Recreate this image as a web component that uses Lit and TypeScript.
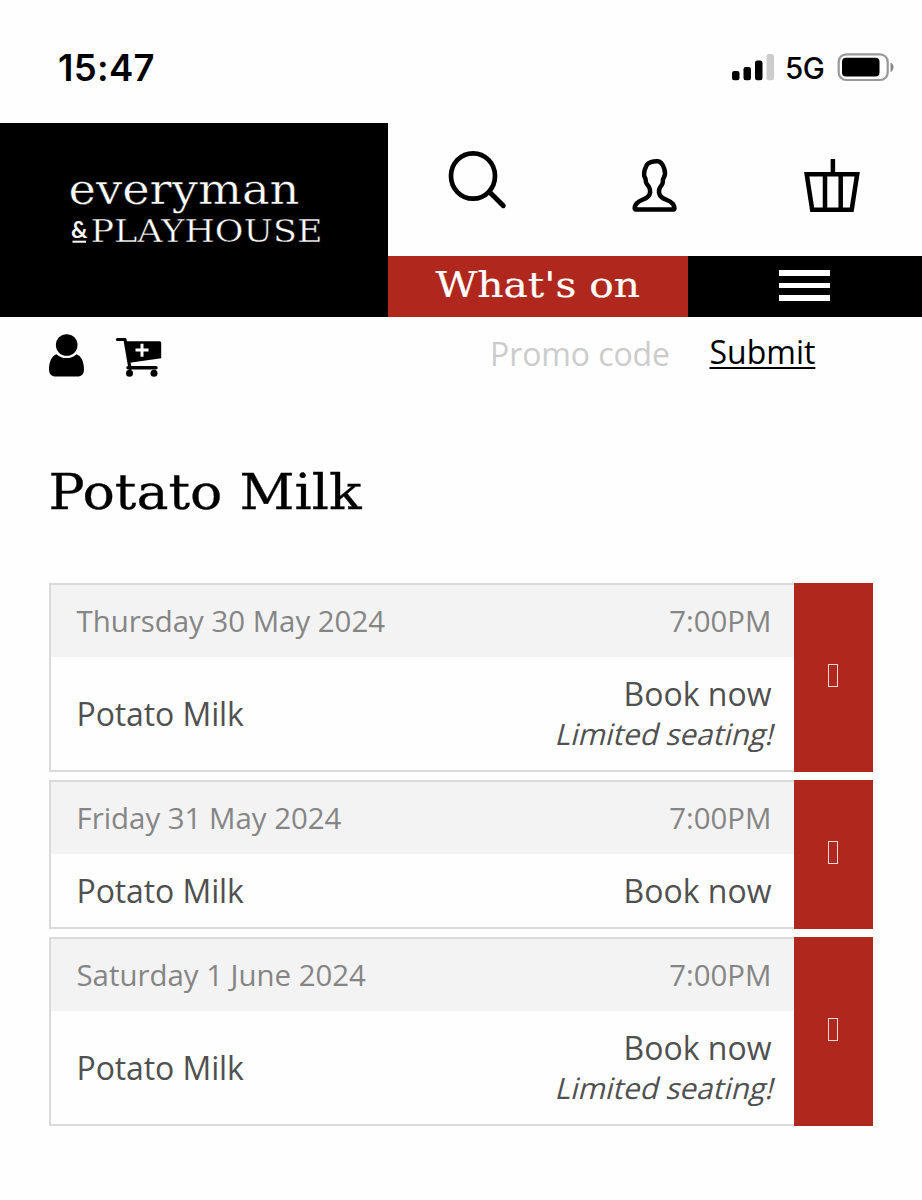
import { LitElement, html, css, nothing } from "lit";
import { customElement, property } from "lit/decorators.js";

interface Performance {
  date: string;
  time: string;
  title: string;
  note?: string;
}

const PERFORMANCES: Performance[] = [
  { date: "Thursday 30 May 2024", time: "7:00PM", title: "Potato Milk", note: "Limited seating!" },
  { date: "Friday 31 May 2024", time: "7:00PM", title: "Potato Milk" },
  { date: "Saturday 1 June 2024", time: "7:00PM", title: "Potato Milk", note: "Limited seating!" },
];

@customElement("status-bar")
class StatusBar extends LitElement {
  static styles = css`
    :host { display: flex; justify-content: space-between; height: 123px; box-sizing: border-box; padding: 48px 27px 0 58px; background: #fefefe; font-family: Inter, sans-serif; color: #000; }
    .time { font-size: 36.5px; font-weight: 600; line-height: 40px; letter-spacing: 0.3px; }
    .right { display: flex; align-items: flex-start; }
    .signal { width: 43px; height: 40px; margin-right: -1px; }
    .network { font-size: 29.5px; font-weight: 500; line-height: 41px; margin-left: 11px; width: 40px; letter-spacing: -0.5px; }
    .battery { width: 58px; height: 40px; margin-left: 12px; }
  `;
  render() {
    return html`
      <div class="time">15:47</div>
      <div class="right">
        <svg class="signal" viewBox="0 0 43 40">
          <rect x="0" y="23" width="7.5" height="9.3" rx="2.3" />
          <rect x="11.5" y="19" width="7.5" height="13.3" rx="2.3" />
          <rect x="23" y="12.5" width="7.5" height="19.8" rx="2.3" />
          <rect x="34.5" y="6" width="7.5" height="26.3" rx="2.3" fill="#ccc" />
        </svg>
        <div class="network">5G</div>
        <svg class="battery" viewBox="0 0 58 40">
          <rect x="1.7" y="6.4" width="49" height="25.6" rx="7.5" fill="none" stroke="#999" stroke-width="2.2" />
          <rect x="5" y="9.8" width="37.5" height="18.6" rx="4" />
          <path d="M53.5 14.5c4 1.5 4 8 0 9.5z" fill="#888" />
        </svg>
      </div>
    `;
  }
}

@customElement("site-header")
class SiteHeader extends LitElement {
  static styles = css`
    :host { display: grid; grid-template-columns: 388.4px 1fr; height: 194px; font-family: "DejaVu Serif", serif; }
    .logo { background: #000; }
    .logo svg { display: block; width: 388px; height: 194px; }
    .word { fill: #fff; stroke: #000; stroke-width: 0.45px; }
    .side { display: grid; grid-template-rows: 133px 61px; background: #fefefe; }
    .icons svg { display: block; width: 533px; height: 133px; }
    .nav { display: grid; grid-template-columns: 299.5px 1fr; }
    .whats { background: #b0271d; }
    .whats svg { display: block; width: 299px; height: 61px; }
    .menu { background: #000; display: flex; flex-direction: column; gap: 7px; padding: 14px 0 0 91.2px; }
    .bar { width: 51px; height: 5.5px; background: #fff; }
  `;
  render() {
    return html`
      <div class="logo">
        <svg viewBox="0 0 388 194">
          <text class="word" x="68.5" y="81.2" font-size="43.5" textLength="231" lengthAdjust="spacingAndGlyphs">everyman</text>
          <text x="71" y="114.5" font-size="22" font-weight="700" font-family="Lato, sans-serif" fill="#fff" textLength="16.5" lengthAdjust="spacingAndGlyphs">&amp;</text>
          <rect x="72.5" y="117.7" width="13.5" height="2" fill="#fff" />
          <text class="word" x="90.5" y="119.3" font-size="32" textLength="232" lengthAdjust="spacingAndGlyphs">PLAYHOUSE</text>
        </svg>
      </div>
      <div class="side">
        <div class="icons">
          <svg viewBox="0 0 533 133" fill="none" stroke="#000">
            <ellipse cx="85" cy="53" rx="22" ry="22.7" stroke-width="4.7" />
            <path d="M101.5 69L115.300 82.700" stroke-width="5" stroke-linecap="round" />
            <path transform="translate(5.300 -.6)" d="M242.700 87.200C240.500 87.200 241.500 83.500 243 81.500C246.500 76.500 253.500 77.500 256 72.500C258 68.500 256.500 65 253.500 61.500C251.500 59 253.300 57.500 251.500 55C249.500 50.500 251.500 46.500 253 43.500C254.500 40 260 38.500 264.500 38.800C268.500 39.200 270 43 271 46.500C272.200 50 271.500 53.500 270.300 55.500C268.700 58 270.500 60 268.500 62.500C265.500 66 265 69.500 266.500 72.500C269 77.500 276 77 279.500 81.500C281 83.500 282 87.200 280 87.200Z" stroke-width="4.500" stroke-linejoin="round" />
            <path d="M418.700 51.200h50.500l-5.500 35.500h-39.500zM437 51v36M452.700 51v36" stroke-width="4.500" />
            <path d="M444.900 36v14" stroke-width="4.500" />
          </svg>
        </div>
        <div class="nav">
          <div class="whats">
            <svg viewBox="0 0 299 61">
              <text x="47.500" y="41.300" font-size="36" fill="#fff" stroke="#fff" stroke-width="0.2" textLength="204.500" lengthAdjust="spacingAndGlyphs">What's on</text>
            </svg>
          </div>
          <div class="menu">
            ${[0, 1, 2].map(() => html`<div class="bar"></div>`)}
          </div>
        </div>
      </div>
    `;
  }
}

@customElement("account-bar")
class AccountBar extends LitElement {
  static styles = css`
    :host { display: flex; height: 80px; box-sizing: border-box; padding-left: 48px; font-family: "Open Sans", sans-serif; font-size: 32px; line-height: 44px; }
    .icons { width: 442px; }
    .icons svg { display: block; width: 120px; height: 70px; }
    .promo { width: 219.500px; margin-top: 15px; color: #ccc; letter-spacing: -0.1px; }
    .submit { margin-top: 13px; color: #000; text-decoration: underline; text-decoration-thickness: 2px; text-underline-offset: 3px; }
  `;
  render() {
    return html`
      <div class="icons">
        <svg viewBox="0 0 120 70">
          <circle cx="18.700" cy="28" r="10.800" />
          <path d="M8.500 37.200c5.500 5.200 14.500 5.200 20 0c5 1.800 7.500 8 7.500 15.300c0 4.500-2.500 7-6.500 7H8c-4.500 0-7-2.500-7-7c0-7.500 2.500-13.500 7.500-15.300z" />
          <path d="M69.500 22.500h7.500l5 29" fill="none" stroke="#000" stroke-width="3.200" stroke-linecap="round" stroke-linejoin="round" />
          <path d="M77 24.200h34.500q1.700 0 1.700 1.700v15.300l-31.500 4.500z" />
          <path d="M80 50.800h28" stroke="#000" stroke-width="3.400" stroke-linecap="round" />
          <circle cx="81.500" cy="56.200" r="3.500" /><circle cx="106" cy="56.200" r="3.500" />
          <path d="M87.500 33h13M94 26.800v13" stroke="#fff" stroke-width="3" />
        </svg>
      </div>
      <div class="promo">Promo code</div>
      <div class="submit">Submit</div>
    `;
  }
}

@customElement("performance-row")
class PerformanceRow extends LitElement {
  @property({ attribute: false }) item!: Performance;
  static styles = css`
    :host { display: grid; grid-template-columns: 1fr 78.500px; font-family: "Open Sans", sans-serif; }
    .details { border: 2px solid #dadada; border-right: 0; background: #fefefe; }
    .head { display: flex; justify-content: space-between; height: 72px; line-height: 72px; padding: 0 22.500px 0 25.500px; background: #f3f3f3; color: #858585; font-size: 29.400px; }
    .body { display: flex; justify-content: space-between; align-items: center; padding: 17px 22.500px 16px 25.500px; color: #505050; font-size: 32px; line-height: 40px; }
    .title { letter-spacing: -0.1px; }
    .booking { text-align: right; }
    .note { transform: skewX(-14deg); font-size: 29.600px; margin-right: -3.500px; }
    .action { display: flex; align-items: center; justify-content: center; background: #b0271d; padding-bottom: 4px; }
    .glyph { width: 10.500px; height: 23.500px; box-sizing: border-box; border: 1px solid #f5dcda; margin-right: 1px; }
  `;
  render() {
    const p = this.item;
    return html`
      <div class="details">
        <div class="head"><span>${p.date}</span><span>${p.time}</span></div>
        <div class="body">
          <div class="title">${p.title}</div>
          <div class="booking">
            <div>Book now</div>
            ${p.note ? html`<div class="note">${p.note}</div>` : nothing}
          </div>
        </div>
      </div>
      <div class="action"><div class="glyph"></div></div>
    `;
  }
}

@customElement("app-root")
class AppRoot extends LitElement {
  static styles = css`
    :host { display: block; height: 1200px; background: #fefefe; overflow: hidden; }
    .title { display: block; width: 400px; height: 186px; font-family: "DejaVu Serif", serif; }
    .list { display: flex; flex-direction: column; gap: 8px; margin: 0 49.500px 0 49px; }
  `;
  render() {
    return html`
      <status-bar></status-bar>
      <site-header></site-header>
      <account-bar></account-bar>
      <svg class="title" viewBox="0 0 400 186">
        <text x="48.500" y="112" font-size="49" stroke="#000" stroke-width="0.3" textLength="313" lengthAdjust="spacingAndGlyphs">Potato Milk</text>
      </svg>
      <div class="list">
        ${PERFORMANCES.map((p) => html`<performance-row .item=${p}></performance-row>`)}
      </div>
    `;
  }
}
